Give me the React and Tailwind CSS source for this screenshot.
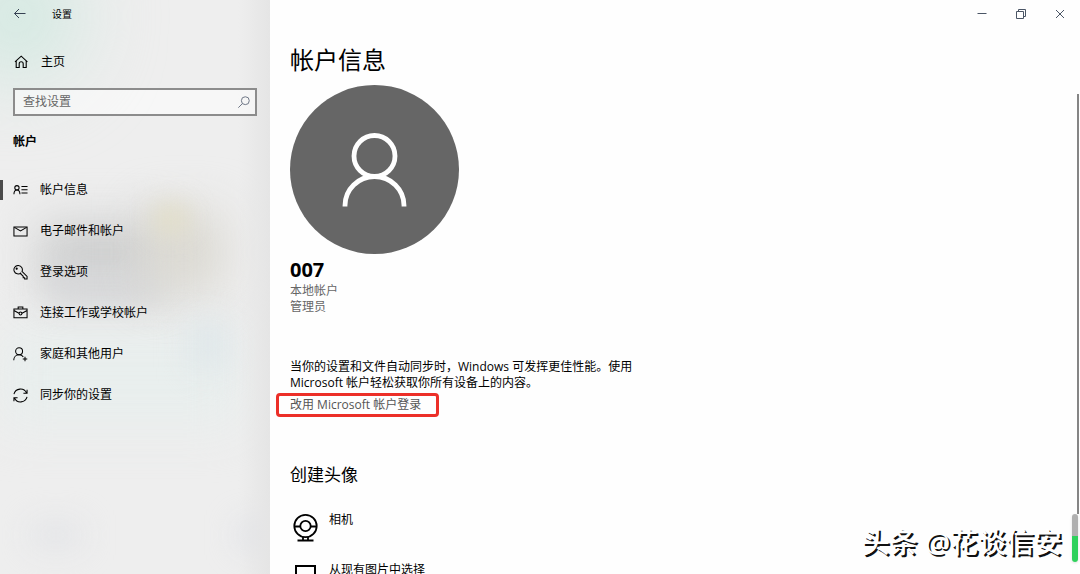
import { useState } from 'react'

const iconProps = {
  viewBox: '0 0 16 16',
  fill: 'none',
  stroke: 'currentColor',
  strokeWidth: 1.1,
  'aria-hidden': true,
}

const navItems = [
  {
    id: 'info',
    label: '帐户信息',
    icon: (
      <>
        <circle cx="4.2" cy="5.1" r="2.3" />
        <path d="M1 12c0-2.6 1.3-4.600 3.2-4.600s3.2 2 3.2 4.600M9 3.700h6.5M9 7.2h6.5M9 10.700h6.5" />
      </>
    ),
  },
  {
    id: 'email',
    label: '电子邮件和帐户',
    icon: (
      <>
        <path d="M1 3.2h14v9.600H1z" />
        <path d="M1.500 3.600l6.500 3.800 6.500-3.800" />
      </>
    ),
  },
  {
    id: 'signin',
    label: '登录选项',
    icon: (
      <>
        <path d="M8.600 8.300a4.500 4.500 0 1 1 1-1.400l5.400 5.300V15h-2.600v-1.400h-1.500v-1.500L8 9.300z" />
        <circle cx="3.9" cy="3.9" r=".6" fill="currentColor" />
      </>
    ),
  },
  {
    id: 'work',
    label: '连接工作或学校帐户',
    icon: (
      <>
        <path d="M1 3.200h14v9.300H1zM5.5 3.200V1h5v2.2M1 4.800l5.400 3M15 4.800l-5.400 3" />
        <circle cx="8" cy="8" r="1.500" />
      </>
    ),
  },
  {
    id: 'family',
    label: '家庭和其他用户',
    icon: (
      <>
        <circle cx="6.5" cy="4.600" r="3.700" />
        <path d="M.8 14c0-3.400 2.400-5.700 5.700-5.700 2 0 3.600.9 4.500 2.300M12.800 10.400v4.800M10.400 12.800h4.800" />
      </>
    ),
  },
  {
    id: 'sync',
    label: '同步你的设置',
    icon: <path d="M1 6.500A7.200 7.200 0 0 1 14.500 5.400M15 1.800v3.900h-3.900M15 9.500A7.200 7.200 0 0 1 1.500 10.600M1 14.200v-3.900h3.900" />,
  },
]

const TitleBar = () => (
  <div className="flex h-7 items-center justify-end gap-[27px] pr-3.5 text-gray-600">
    <button aria-label="最小化">
      <svg className="h-3 w-3" viewBox="0 0 12 12" fill="none" stroke="currentColor" aria-hidden="true">
        <path d="M1.500 5.500h9" />
      </svg>
    </button>
    <button aria-label="还原">
      <svg className="h-3 w-3" viewBox="0 0 12 12" fill="none" stroke="currentColor" aria-hidden="true">
        <path d="M1.500 3.500h7v7h-7zM3.500 3.500v-2h7v7h-2" />
      </svg>
    </button>
    <button aria-label="关闭">
      <svg className="h-3 w-3" viewBox="0 0 12 12" fill="none" stroke="currentColor" aria-hidden="true">
        <path d="M2 2l8 8M10 2l-8 8" />
      </svg>
    </button>
  </div>
)

// Acrylic backdrop: soft patches of the wallpaper behind the pane
const Backdrop = () => (
  <div className="absolute inset-0 -z-10 overflow-hidden bg-[#eeeeee]" aria-hidden="true">
    <div className="absolute -top-12 -left-12 h-32 w-32 rounded-full bg-[#d2e9e1] blur-2xl" />
    <div className="absolute top-[330px] left-0 h-24 w-60 bg-[#e8eeed] blur-xl" />
    <div className="absolute top-[225px] left-10 h-16 w-32 bg-[#cbcccc] blur-xl" />
    <div className="absolute top-[270px] left-12 h-8 w-28 bg-[#d6d7d9] blur-lg" />
    <div className="absolute top-[212px] left-36 h-20 w-20 bg-[#dbd9d2] blur-xl" />
    <div className="absolute top-[205px] left-[155px] h-7 w-8 bg-[#e2dec8] blur-md" />
    <div className="absolute top-[320px] left-48 h-12 w-8 bg-[#dde6e9] blur-lg" />
    <div className="absolute top-[525px] left-8 h-5 w-12 bg-[#dfe1e5] blur-lg" />
    <div className="absolute top-[525px] left-60 h-5 w-10 bg-[#dadce4] blur-lg" />
    <div className="absolute inset-y-0 right-0 w-8 bg-linear-to-r from-transparent to-[#e5e5e5]" />
  </div>
)

const Sidebar = ({ current, onSelect }) => (
  <aside className="relative isolate w-1/4 shrink-0">
    <Backdrop />

    <div className="flex h-7 items-center gap-6 pl-3">
      <button aria-label="返回" className="text-gray-700">
        <svg {...iconProps} strokeWidth="1" className="h-4 w-4">
          <path d="M13.500 7.500H2.500M7 3L2.500 7.500 7 12" />
        </svg>
      </button>
      <span className="text-[10px] leading-4">设置</span>
    </div>

    <a href="#home" className="mt-[26px] flex items-center gap-3 pl-[13px] text-xs">
      <svg {...iconProps} className="h-4 w-4">
        <path d="M2 7.800l6.200-5.600L14.400 7.800M3.200 7V13.500h3V9.700a2 2 0 0 1 4 0V13.500h3V7" />
      </svg>
      主页
    </a>

    <div className="mx-[13px] mt-[18px] flex h-7 items-center border-2 border-[#8c8c8c] bg-white/50 px-2 pr-1">
      <input
        type="search"
        aria-label="查找设置"
        placeholder="查找设置"
        className="min-w-0 flex-1 bg-transparent text-xs outline-none placeholder:text-[#666]"
      />
      <svg {...iconProps} className="h-3.5 w-3.5 text-gray-500">
        <circle cx="9.500" cy="6.500" r="4.500" />
        <path d="M6.300 9.700L1.500 14.500" />
      </svg>
    </div>

    <h2 className="mt-[18px] pl-[13px] text-xs font-bold">帐户</h2>

    <nav className="mt-5 flex flex-col gap-px">
      {navItems.map((item) => (
        <a
          key={item.id}
          href={`#${item.id}`}
          onClick={() => onSelect(item.id)}
          className="flex h-10 items-center text-xs"
        >
          <span className={item.id === current ? 'h-5 w-[3px] bg-[#4a4a4a]' : 'h-5 w-[3px]'} />
          <svg {...iconProps} className="mr-3 ml-2.5 h-[15px] w-[15px]">
            {item.icon}
          </svg>
          {item.label}
        </a>
      ))}
    </nav>
  </aside>
)

const App = () => {
  const [current, setCurrent] = useState('info')

  return (
    <div className="relative flex h-screen overflow-hidden bg-white font-['Open_Sans','Noto_Sans_CJK_SC',sans-serif] text-black">
      <Sidebar current={current} onSelect={setCurrent} />

      <main className="min-w-0 flex-1 bg-[#fefefe]">
        <TitleBar />

        <div className="pt-4 pl-5">
          <h1 className="text-2xl leading-8">帐户信息</h1>

          <div className="mt-[9px] h-[169px] w-[169px] rounded-full bg-[#666]">
            <svg viewBox="0 0 169 169" fill="none" stroke="#fff" strokeWidth="4.800" aria-hidden="true">
              <circle cx="84.500" cy="71" r="20.500" />
              <path d="M55 121.500v-1a29.500 29 0 0 1 59 0v1" />
            </svg>
          </div>

          <div className="mt-1 text-xl leading-6 font-bold">007</div>
          <p className="mt-px text-xs text-[#666]">本地帐户</p>
          <p className="text-xs text-[#666]">管理员</p>

          <p className="mt-11 max-w-[345px] text-xs">
            当你的设置和文件自动同步时，Windows 可发挥更佳性能。使用 Microsoft 帐户轻松获取你所有设备上的内容。
          </p>
          <a
            href="#microsoft"
            className="mt-0.5 -ml-3.5 flex h-6 w-[163px] items-center rounded-sm border-3 border-[#ec2f28] pl-[11px] text-xs text-[#555]"
          >
            改用 Microsoft 帐户登录
          </a>

          <h2 className="mt-[46px] text-[17px] leading-6">创建头像</h2>

          <button className="mt-[25px] flex items-start gap-[7px] text-xs">
            <svg className="h-8 w-8" viewBox="0 0 32 32" fill="none" stroke="currentColor" strokeWidth="1.800" aria-hidden="true">
              <circle cx="15.500" cy="14" r="11.200" />
              <circle cx="15.500" cy="14" r="5.200" />
              <path d="M4.300 14.500h6M20.700 14.500h6M13 25v3M18 25v3M7.500 28.500h16" />
            </svg>
            相机
          </button>

          <button className="mt-[18px] flex items-start gap-[7px] text-xs">
            <svg className="h-8 w-8" viewBox="0 0 32 32" fill="none" stroke="currentColor" strokeWidth="2" aria-hidden="true">
              <path d="M6 4h19v20H6z" />
            </svg>
            从现有图片中选择
          </button>
        </div>
      </main>

      <div className="absolute top-[94px] right-px h-[420px] w-0.5 bg-[#858585]" />
      <div className="absolute right-0.5 bottom-3 h-12 w-1.5 rounded-full bg-linear-to-b from-[#b0b0b0] from-45% to-[#2fd15c] to-45% shadow" />
      <div className="absolute right-[18px] bottom-3 text-[28px] leading-10 font-medium text-white [text-shadow:2px_2px_0_#111]">
        头条 @花谈信安
      </div>
    </div>
  )
}

export default App
